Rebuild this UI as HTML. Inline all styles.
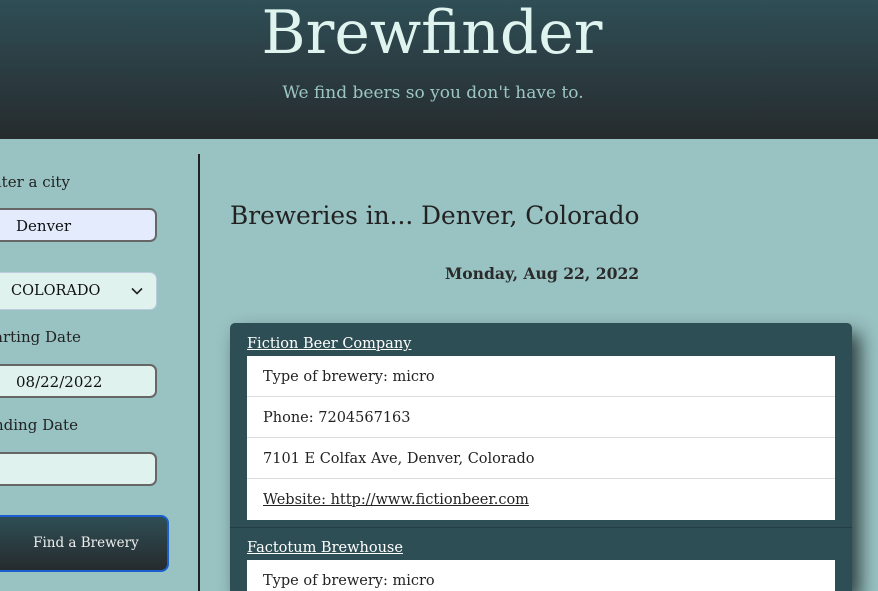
<!DOCTYPE html>
<html><head><meta charset="utf-8"><style>
*{margin:0;padding:0;box-sizing:border-box}
html,body{width:878px;height:591px;overflow:hidden}
body{background:#99c2c2;font-family:"DejaVu Serif","Liberation Serif",serif;color:#222;position:relative}
.hdr{position:absolute;left:0;top:0;width:878px;height:139px;background:linear-gradient(#2f4e56,#262b2d)}
.t{position:absolute;left:0;width:864px;text-align:center;top:-2px;font-size:60px;color:#e0f4ef}
.s{position:absolute;left:0;width:866px;text-align:center;top:83px;font-size:17px;color:#9cc6c3}
.a{position:absolute;white-space:nowrap}
.lbl{font-size:15px;color:#222}
.in{position:absolute;left:-10px;width:167px;height:34px;border:2px solid #666;border-radius:7px;font-size:15px;color:#111;padding:7px 0 0 24px}
.line{position:absolute;left:198px;top:154px;width:2px;height:437px;background:#222}
.card{position:absolute;left:230px;top:323px;width:622px;height:268px;background:#2e4e55;border-radius:5px 5px 0 0;box-shadow:8px 10px 18px rgba(20,30,30,.8)}
.nm{position:absolute;left:17px;font-size:14.5px;color:#fff;text-decoration:underline}
.ls{position:absolute;left:17px;width:588px;background:#fff}
.r{height:41px;border-bottom:1px solid #ddd;font-size:14.5px;padding:13px 0 0 16px;color:#222}
.r:last-child{border-bottom:none}
</style></head><body>
<div class="hdr"><div class="t">Brewfinder</div><div class="s">We find beers so you don't have to.</div></div>
<div class="a lbl" style="left:-8px;top:173px">nter a city</div>
<div class="in" style="top:208px;background:#e3ebfc">Denver</div>
<div class="in" style="top:272px;height:38px;background:#e0f2ee;border:1px solid #bcd;padding:10px 0 0 20px;font-size:14.5px">COLORADO<svg style="position:absolute;left:140px;top:14px" width="12" height="8" viewBox="0 0 12 8"><path d="M1 1.5 6 6.5 11 1.5" fill="none" stroke="#222" stroke-width="1.6"/></svg></div>
<div class="a lbl" style="left:-6px;top:328px">arting Date</div>
<div class="in" style="top:364px;background:#e0f2ee">08/22/2022</div>
<div class="a lbl" style="left:-6px;top:416px">nding Date</div>
<div class="in" style="top:452px;background:#e0f2ee"></div>
<div class="a" style="left:-10px;top:515px;width:179px;height:57px;border:2px solid #1a5fd0;border-radius:8px;background:linear-gradient(#2e4e55,#262b2d);color:#eee;font-size:13.5px;text-align:center;padding-top:18px">&nbsp;&nbsp;&nbsp;Find a Brewery</div>
<div class="line"></div>
<div class="a" style="left:230px;top:201px;font-size:24.8px;color:#222">Breweries in... Denver, Colorado</div>
<div class="a" style="left:445px;top:264px;font-size:15.6px;font-weight:bold;color:#2a2a2a">Monday, Aug 22, 2022</div>
<div class="card">
<div class="nm" style="top:13px">Fiction Beer Company</div>
<div class="ls" style="top:33px"><div class="r">Type of brewery: micro</div><div class="r">Phone: 7204567163</div><div class="r">7101 E Colfax Ave, Denver, Colorado</div><div class="r"><u>Website: http://www.fictionbeer.com</u></div></div>
<div style="position:absolute;left:0;top:204px;width:622px;height:1px;background:#223e44"></div>
<div class="nm" style="top:217px">Factotum Brewhouse</div>
<div class="ls" style="top:237px;height:40px"><div class="r">Type of brewery: micro</div></div>
</div>
</body></html>
